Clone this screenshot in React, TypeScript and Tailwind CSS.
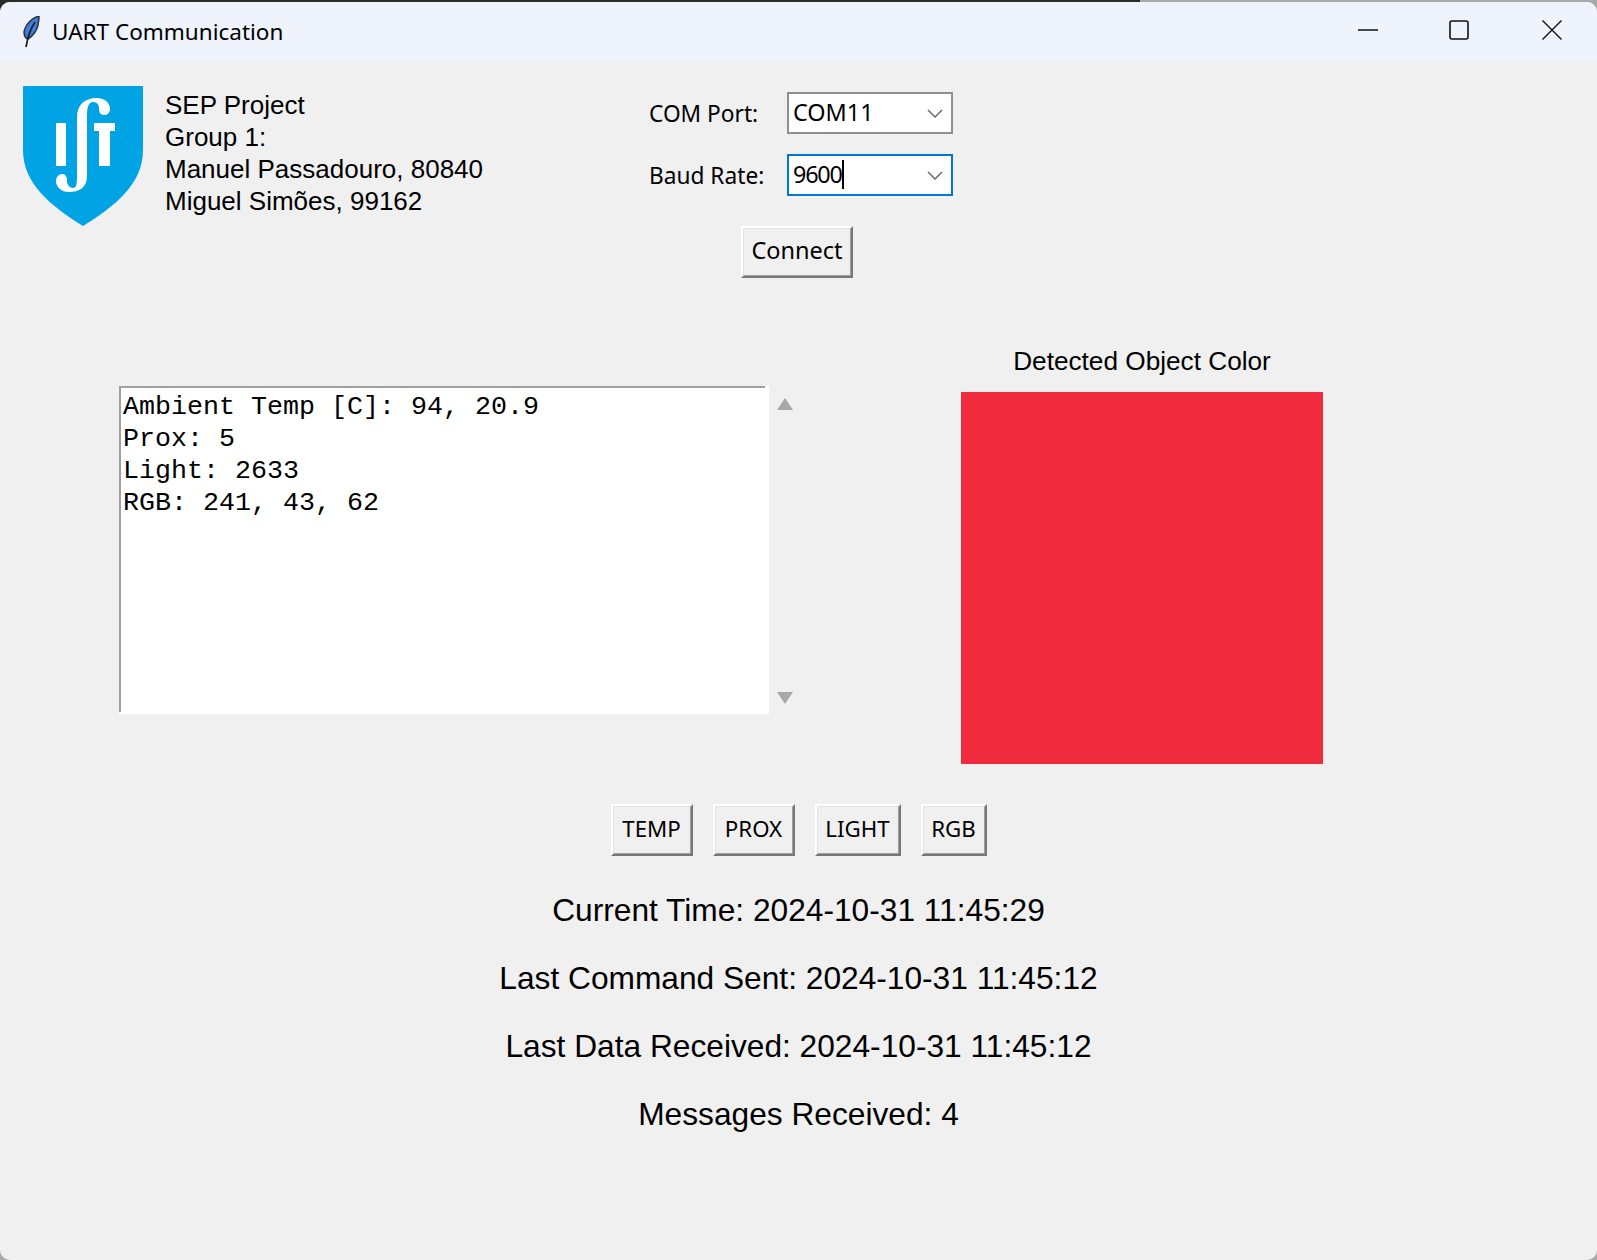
import React from 'react';

const lines = ['Ambient Temp [C]: 94, 20.9', 'Prox: 5', 'Light: 2633', 'RGB: 241, 43, 62'];
const commands = [
  { label: 'TEMP', width: 'w-[82px]' },
  { label: 'PROX', width: 'w-[82px]' },
  { label: 'LIGHT', width: 'w-[86px]' },
  { label: 'RGB', width: 'w-[66px]' },
];
const status = [
  'Current Time: 2024-10-31 11:45:29',
  'Last Command Sent: 2024-10-31 11:45:12',
  'Last Data Received: 2024-10-31 11:45:12',
  'Messages Received: 4',
];

function Feather() {
  return (
    <svg width="20" height="32" viewBox="0 0 20 32">
      <path d="M18 0C11 2 5 8 3.5 14c-.7 3-.3 6 1.5 8l2 1c5-3 9-9 10-14 .5-3 1-6 1-9z" fill="#3f7fd8" stroke="#2b3442" strokeWidth="1.6" />
      <path d="M14 6C10 12 7 19 5 31" fill="none" stroke="#1c222c" strokeWidth="1.8" />
    </svg>
  );
}

function Logo() {
  return (
    <svg width="120" height="140" viewBox="0 0 120 140">
      <path d="M0 0H120V64C120 98 92 120 60 140 28 120 0 98 0 64Z" fill="#00a3e4" />
      <rect x="33" y="37" width="10" height="43" fill="#fff" />
      <rect x="71" y="37" width="21" height="8" fill="#fff" />
      <rect x="76" y="37" width="11" height="43" fill="#fff" />
      <path d="M54 80V32C54 18 62 12 74 12C82 12 87 17 87 23C87 27 84 29 81 29C77 29 76 26 76 22C76 18 73 16 70 16C66 16 64 20 64 30V80Z" fill="#fff" />
      <path d="M64 78V90C64 102 56 106 46 106C38 106 33 101 33 95C33 91 36 88 39 88C43 88 44 91 44 95C44 99 47 102 50 102C54 102 54 96 54 88V78Z" fill="#fff" />
    </svg>
  );
}

function TkButton({ label, className }: { label: string; className: string }) {
  return (
    <button className={`border-2 border-t-white border-l-white border-r-[#777] border-b-[#777] bg-[#f0f0f0] font-['Noto_Sans',sans-serif] text-black ${className}`}>
      <span className="flex h-full w-full items-center justify-center border border-t-[#e3e3e3] border-l-[#e3e3e3] border-r-[#a0a0a0] border-b-[#a0a0a0] pb-[2px]">{label}</span>
    </button>
  );
}

function Combo({ value, focused }: { value: string; focused?: boolean }) {
  return (
    <div className={`flex h-[42px] w-[166px] items-center justify-between bg-white pl-[4px] pr-[8px] text-[23.4px] text-black border-2 ${focused ? 'border-[#0078d7]' : 'border-[#8f8f8f]'}`}>
      <span className={`flex items-center ${focused ? 'tracking-[-1.2px]' : ''}`}>
        {value}
        {focused && <span className="h-[29px] w-[2px] bg-black" />}
      </span>
      <svg width="16" height="9" viewBox="0 0 16 9">
        <path d="M1 1l7 7 7-7" fill="none" stroke="#6d6d6d" strokeWidth="1.5" />
      </svg>
    </div>
  );
}

export default function App() {
  return (
    <div className="h-[1260px] w-[1597px] overflow-hidden bg-[#a9a9a9] bg-[linear-gradient(90deg,#2b2b2b_1140px,#a9a9a9_1140px)] bg-[length:100%_20px] bg-no-repeat pt-[2px]">
      <div className="flex h-[1258px] flex-col overflow-hidden rounded-[10px] bg-[#f0f0f0]">
        {/* Title bar */}
        <div className="flex h-[60px] items-center bg-[#eff3fb] pl-[21px]">
          <Feather />
          <span className="ml-[11px] font-['Noto_Sans',sans-serif] text-[22.5px] text-black">UART Communication</span>
          <div className="ml-auto mr-[35px] flex items-center gap-[71px] pb-[4px]">
            <svg width="20" height="20" viewBox="0 0 20 20">
              <path d="M0 10H20" stroke="#111" strokeWidth="1.6" />
            </svg>
            <svg width="20" height="20" viewBox="0 0 20 20">
              <rect x="1" y="1" width="18" height="18" rx="2" fill="none" stroke="#111" strokeWidth="1.6" />
            </svg>
            <svg width="20" height="20" viewBox="0 0 20 20" className="ml-[2px]">
              <path d="M0.5 0.5L19.5 19.5M19.5 0.5L0.5 19.5" stroke="#111" strokeWidth="1.4" />
            </svg>
          </div>
        </div>

        {/* Header */}
        <div className="flex h-[284px] items-start">
          <div className="ml-[23px] mt-[24px]">
            <Logo />
          </div>
          <div className="ml-[22px] mt-[27px] w-[484px] font-['Liberation_Sans',sans-serif] text-[26px] leading-[32px] text-black">
            <div>SEP Project</div>
            <div>Group 1:</div>
            <div>Manuel Passadouro, 80840</div>
            <div>Miguel Simões, 99162</div>
          </div>
          <div className="mt-[30px] flex w-[304px] flex-col items-center font-['Noto_Sans',sans-serif]">
            <div className="flex w-full items-center justify-between text-[22.7px] text-black">
              <span className="pt-[2px]">COM Port:</span>
              <Combo value="COM11" />
            </div>
            <div className="mt-[20px] flex w-full items-center justify-between text-[22.7px] text-black">
              <span className="pt-[2px]">Baud Rate:</span>
              <Combo value="9600" focused />
            </div>
            <TkButton label="Connect" className="mr-[8px] mt-[30px] h-[52px] w-[112px] text-[23.5px]" />
          </div>
        </div>

        {/* Log and colour */}
        <div className="flex items-start">
          <div className="ml-[119px] mt-[40px] flex h-[328px] w-[650px] flex-col bg-white">
            <div className="flex-1 border-l-2 border-t-2 border-l-[#a0a0a0] border-t-[#a0a0a0] mb-[2px] mr-[4px] pl-[2px] pt-[3px] font-['Liberation_Mono',monospace] text-[26.67px] leading-[32px] text-black whitespace-pre">
              {lines.map((line) => (
                <div key={line}>{line}</div>
              ))}
            </div>
          </div>
          <div className="mt-[52px] ml-[8px] flex h-[306px] w-[17px] flex-col justify-between">
            <div className="h-0 w-0 border-x-[8px] border-b-[12px] border-x-transparent border-b-[#a8a8a8]" />
            <div className="h-0 w-0 border-x-[8px] border-t-[12px] border-x-transparent border-t-[#a8a8a8]" />
          </div>
          <div className="ml-[167px] flex flex-col items-center">
            <span className="h-[46px] font-['Liberation_Sans',sans-serif] text-[26.2px] leading-[30px] text-black">Detected Object Color</span>
            <div className="h-[372px] w-[362px] bg-[#f12b3e]" />
          </div>
        </div>

        {/* Commands */}
        <div className="mt-[40px] flex justify-center gap-[20px] text-[22.3px]">
          {commands.map((c) => (
            <TkButton key={c.label} label={c.label} className={`h-[52px] ${c.width}`} />
          ))}
        </div>

        {/* Status */}
        <div className="mt-[34px] flex flex-col items-center gap-[28px] font-['Liberation_Sans',sans-serif] text-[31.7px] leading-[40px] text-black">
          {status.map((s) => (
            <div key={s}>{s}</div>
          ))}
        </div>
      </div>
    </div>
  );
}
